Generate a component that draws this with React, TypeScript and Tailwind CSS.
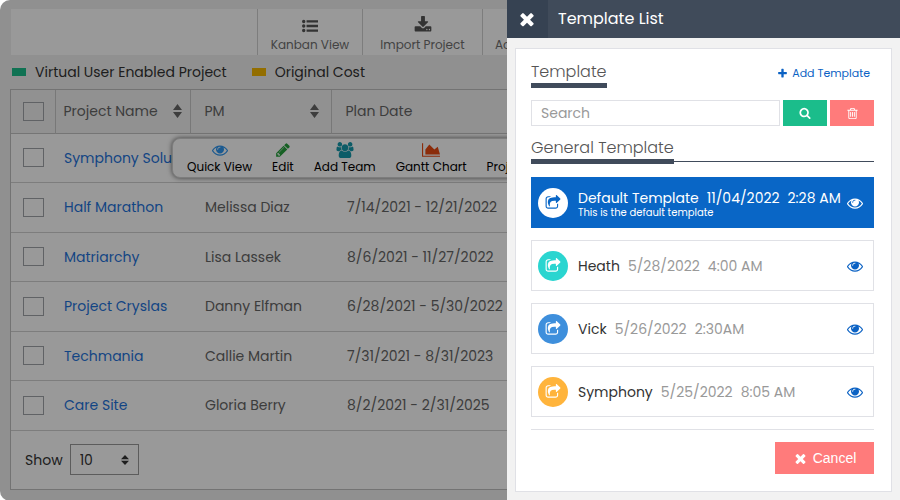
import React from "react";

const ICONS = {
  times:
    "M1490 1322q0 40-28 68l-136 136q-28 28-68 28t-68-28l-294-294-294 294q-28 28-68 28t-68-28l-136-136q-28-28-28-68t28-68l294-294-294-294q-28-28-28-68t28-68l136-136q28-28 68-28t68 28l294 294 294-294q28-28 68-28t68 28l136 136q28 28 28 68t-28 68l-294 294 294 294q28 28 28 68z",
  eye: "M1664 960q-152-236-381-353 61 104 61 225 0 185-131.5 316.5t-316.5 131.5-316.5-131.5-131.5-316.5q0-121 61-225-229 117-381 353 133 205 333.5 326.5t434.5 121.5 434.5-121.5 333.5-326.5zm-720-384q0-20-14-34t-34-14q-125 0-214.5 89.5t-89.5 214.5q0 20 14 34t34 14 34-14 14-34q0-86 61-147t147-61q20 0 34-14t14-34zm848 384q0 34-20 69-140 230-376.5 368.5t-499.5 138.5-499.5-139-376.5-368q-20-35-20-69t20-69q140-229 376.5-368t499.5-139 499.5 139 376.5 368q20 35 20 69z",
  search:
    "M1216 832q0-185-131.5-316.5t-316.5-131.5-316.5 131.5-131.5 316.5 131.5 316.5 316.5 131.5 316.5-131.5 131.5-316.5zm512 832q0 52-38 90t-90 38q-54 0-90-38l-343-342q-179 124-399 124-143 0-273.5-55.5t-225-150-150-225-55.5-273.5 55.5-273.5 150-225 225-150 273.5-55.5 273.5 55.5 225 150 150 225 55.5 273.5q0 220-124 399l343 343q37 37 37 90z",
  plus: "M1600 736v192q0 40-28 68t-68 28h-416v416q0 40-28 68t-68 28h-192q-40 0-68-28t-28-68v-416h-416q-40 0-68-28t-28-68v-192q0-40 28-68t68-28h416v-416q0-40 28-68t68-28h192q40 0 68 28t28 68v416h416q40 0 68 28t28 68z",
  trash:
    "M704 736v576q0 14-9 23t-23 9h-64q-14 0-23-9t-9-23v-576q0-14 9-23t23-9h64q14 0 23 9t9 23zm256 0v576q0 14-9 23t-23 9h-64q-14 0-23-9t-9-23v-576q0-14 9-23t23-9h64q14 0 23 9t9 23zm256 0v576q0 14-9 23t-23 9h-64q-14 0-23-9t-9-23v-576q0-14 9-23t23-9h64q14 0 23 9t9 23zm128 724v-948h-896v948q0 22 7 40.5t14.5 27 10.5 8.5h832q3 0 10.5-8.5t14.5-27 7-40.5zm-672-1076h448l-48-117q-7-9-17-11h-317q-10 2-17 11zm928 32v64q0 14-9 23t-23 9h-96v948q0 83-47 143.5t-113 60.5h-832q-66 0-113-58.5t-47-141.5v-952h-96q-14 0-23-9t-9-23v-64q0-14 9-23t23-9h309l70-167q15-37 54-63t79-26h320q40 0 79 26t54 63l70 167h309q14 0 23 9t9 23z",
  download:
    "M1344 1344q0-26-19-45t-45-19-45 19-19 45 19 45 45 19 45-19 19-45zm256 0q0-26-19-45t-45-19-45 19-19 45 19 45 45 19 45-19 19-45zm128-224v320q0 40-28 68t-68 28h-1472q-40 0-68-28t-28-68v-320q0-40 28-68t68-28h465l135 136q58 56 136 56t136-56l136-136h464q40 0 68 28t28 68zm-325-569q17 41-14 70l-448 448q-18 19-45 19t-45-19l-448-448q-31-29-14-70 17-39 59-39h256v-448q0-26 19-45t45-19h256q26 0 45 19t19 45v448h256q42 0 59 39z",
  list: "M0 384a192 192 0 1 0 384 0a192 192 0 1 0-384 0zM0 896a192 192 0 1 0 384 0a192 192 0 1 0-384 0zM0 1408a192 192 0 1 0 384 0a192 192 0 1 0-384 0zM512 256h1280v256H512zM512 768h1280v256H512zM512 1280h1280v256H512z",
  pencil:
    "M491 1536l91-91-235-235-91 91v107h128v128h107zm523-928q0-22-22-22-10 0-17 7l-542 542q-7 7-7 17 0 22 22 22 10 0 17-7l542-542q7-7 7-17zm-54-192l416 416-832 832h-416v-416zm683 96q0 53-37 90l-166 166-416-416 166-165q36-38 90-38 53 0 91 38l235 234q37 39 37 91z",
  users:
    "M529 896q-162 5-265 128h-134q-82 0-138-40.5t-56-118.5q0-353 124-353 6 0 43.5 21t97.5 42.5 119 21.5q67 0 133-23-5 37-5 66 0 139 81 256zm1071 637q0 120-73 189.5t-194 69.5h-874q-121 0-194-69.5t-73-189.5q0-53 3.5-103.5t14-109 26.5-108.5 43-97.5 62-81 85.5-53.5 111.5-20q10 0 43 21.5t73 48 107 48 135 21.5 135-21.5 107-48 73-48 43-21.5q61 0 111.5 20t85.5 53.5 62 81 43 97.5 26.5 108.5 14 109 3.5 103.5zm-1024-1277q0 106-75 181t-181 75-181-75-75-181 75-181 181-75 181 75 75 181zm704 384q0 159-112.5 271.5t-271.5 112.5-271.5-112.5-112.5-271.5 112.5-271.5 271.5-112.5 271.5 112.5 112.5 271.5zm576 225q0 78-56 118.5t-138 40.5h-134q-103-123-265-128 81-117 81-256 0-29-5-66 66 23 133 23 59 0 119-21.5t97.5-42.5 43.5-21q124 0 124 353zm-128-609q0 106-75 181t-181 75-181-75-75-181 75-181 181-75 181 75 75 181z",
  chart: "M1920 1536v128h-2048v-1536h128v1408h1920zm-256-1024l256 896h-1664v-576l448-576 576 576z",
  share:
    "M1472 989v259q0 119-84.5 203.5t-203.5 84.5h-832q-119 0-203.5-84.5t-84.5-203.5v-832q0-119 84.5-203.5t203.5-84.5h255q13 0 22.5 9.5t9.5 22.5q0 27-26 32-77 26-133 60-10 4-16 4h-112q-66 0-113 47t-47 113v832q0 66 47 113t113 47h832q66 0 113-47t47-113v-214q0-19 18-29 28-13 54-37 16-16 35-8 21 9 21 29zm237-496l-384 384q-18 19-45 19-12 0-25-5-39-17-39-59v-192h-160q-323 0-438 131-119 137-74 473 3 23-20 34-8 2-12 2-16 0-26-13-10-14-21-31t-39.5-68.5-49.5-99.5-38.5-114-17.5-122q0-49 3.5-91t14-90 28-88 47-81.5 68.5-74 94.5-61.5 124.5-48.5 159.5-30.5 196.5-11h160v-192q0-42 39-59 13-5 25-5 26 0 45 19l384 384q19 19 19 45t-19 45z",
};

type IconName = keyof typeof ICONS;

function Icon({ name, className = "", box = "0 0 1792 1792" }: { name: IconName; className?: string; box?: string }) {
  return (
    <svg viewBox={box} fill="currentColor" aria-hidden="true" className={`shrink-0 ${className}`}>
      <path d={ICONS[name]} />
    </svg>
  );
}

function SortArrows({ className }: { className: string }) {
  return (
    <svg viewBox="0 0 8 14" preserveAspectRatio="none" fill="currentColor" aria-hidden="true" className={className}>
      <path d="M4 0 8 6H0zM4 14 0 8h8z" />
    </svg>
  );
}

const projects = [
  { name: "Symphony Solu", pm: "", date: "" },
  { name: "Half Marathon", pm: "Melissa Diaz", date: "7/14/2021 - 12/21/2022" },
  { name: "Matriarchy", pm: "Lisa Lassek", date: "8/6/2021 - 11/27/2022" },
  { name: "Project Cryslas", pm: "Danny Elfman", date: "6/28/2021 - 5/30/2022" },
  { name: "Techmania", pm: "Callie Martin", date: "7/31/2021 - 8/31/2023" },
  { name: "Care Site", pm: "Gloria Berry", date: "8/2/2021 - 2/31/2025" },
];

const templates = [
  { name: "Heath", date: "5/28/2022", time: "4:00 AM", color: "bg-[#2ad5d0]" },
  { name: "Vick", date: "5/26/2022", time: "2:30AM", color: "bg-[#3e8fdc]" },
  { name: "Symphony", date: "5/25/2022", time: "8:05 AM", color: "bg-[#ffb43c]" },
];

function Check({ label }: { label: string }) {
  return (
    <input
      type="checkbox"
      aria-label={label}
      className="block h-[19px] w-[21px] appearance-none border border-[#a0a3a8] bg-transparent checked:bg-[#0a66c8]"
    />
  );
}

function ProjectTable() {
  return (
    <table className="w-[560px] table-fixed border-collapse text-left">
      <colgroup>
        <col className="w-[44px]" />
        <col className="w-[135px]" />
        <col className="w-[141px]" />
        <col />
      </colgroup>
      <thead>
        <tr className="h-[43px] border-b border-[#c4c4c4] bg-[#f2f2f2] text-[#666]">
          <th className="border-r border-[#c8c8c8] pl-3 font-normal">
            <Check label="Select all projects" />
          </th>
          <th className="border-r border-[#c8c8c8] pr-2 pl-2 font-normal">
            <div className="flex items-center justify-between">
              Project Name
              <SortArrows className="h-[14px] w-[9px]" />
            </div>
          </th>
          <th className="border-r border-[#c8c8c8] pr-3 pl-[14px] font-normal">
            <div className="flex items-center justify-between">
              PM
              <SortArrows className="h-[14px] w-[9px]" />
            </div>
          </th>
          <th className="pl-[14px] font-normal">Plan Date</th>
        </tr>
      </thead>
      <tbody>
        {projects.map((p) => (
          <tr key={p.name} className="h-[49px] border-b border-[#d0d0d0] whitespace-nowrap text-[#666] even:h-[50px]">
            <td className="pl-3">
              <Check label={`Select ${p.name}`} />
            </td>
            <td className="pl-[9px]">
              <a href="#project" className="text-[#1f74dc]">
                {p.name}
              </a>
            </td>
            <td className="pl-[15px]">{p.pm}</td>
            <td className="pl-4">{p.date}</td>
          </tr>
        ))}
      </tbody>
    </table>
  );
}

function RowMenu() {
  const item = "flex shrink-0 flex-col items-center gap-px";
  return (
    <div className="absolute top-[138px] left-[172px] flex h-10 w-[400px] items-center gap-5 rounded-lg border border-[#d0d0d0] bg-white pl-[14px] text-xs leading-4 whitespace-nowrap text-black shadow-[0_0_5px_rgba(0,0,0,0.6)]">
      <button className={item}>
        <Icon name="eye" className="h-4 w-4 text-[#2e96f0]" />
        Quick View
      </button>
      <button className={item}>
        <Icon name="pencil" className="h-4 w-4 text-[#25a03c]" />
        Edit
      </button>
      <button className={item}>
        <Icon name="users" box="-64 0 1920 1792" className="h-4 w-[18px] text-[#1599ac]" />
        Add Team
      </button>
      <button className={item}>
        <Icon name="chart" box="-128 0 2048 1792" className="h-4 w-[18px] text-[#e84a12]" />
        Gantt Chart
      </button>
      <button className={`${item} pt-[17px]`}>Proj</button>
    </div>
  );
}

function ProjectPage() {
  const tool =
    "flex shrink-0 flex-col items-center justify-end gap-[3px] border-l border-[#d0d0d0] pb-[2px] text-xs leading-4 text-[#707070]";
  return (
    <main className="relative min-w-0 flex-1 overflow-hidden rounded-l-[10px] bg-[#f0f0f0] pt-[9px] pb-[11px] pl-[10px] text-sm">
      <div className="ml-px flex h-[46px] bg-white">
        <div className="min-w-0 flex-1" />
        <button className={`${tool} w-[105px]`}>
          <Icon name="list" className="h-4 w-4 text-[#555]" />
          Kanban View
        </button>
        <button className={`${tool} w-[120px]`}>
          <Icon name="download" className="h-[18px] w-[18px] text-[#555]" />
          Import Project
        </button>
        <button className={`${tool} w-[25px] pl-4`}>Ad</button>
      </div>
      <div className="flex h-[34px] items-center pl-[2px] text-[#333]">
        <span className="mr-[9px] h-2 w-[14px] bg-[#1bbe8b]" />
        Virtual User Enabled Project
        <span className="mr-[9px] ml-[25px] h-2 w-[14px] bg-[#f5b800]" />
        Original Cost
      </div>
      <div className="border border-r-0 border-[#c0c0c0] bg-white">
        <ProjectTable />
        <div className="flex h-[58px] items-center gap-[7px] pl-[14px] text-[#333]">
          <label htmlFor="page-size">Show</label>
          <div className="relative">
            <select
              id="page-size"
              defaultValue="10"
              className="block h-[31px] w-[69px] appearance-none border border-[#999] bg-transparent pl-[9px]"
            >
              <option>10</option>
              <option>25</option>
              <option>50</option>
            </select>
            <SortArrows className="pointer-events-none absolute top-[11px] right-[10px] h-[10px] w-2" />
          </div>
        </div>
      </div>
      <RowMenu />
      <div className="absolute inset-0 bg-black/40" />
    </main>
  );
}

function SectionTitle({ children }: { children: React.ReactNode }) {
  return <h2 className="border-b-[5px] border-[#404b5b] text-base leading-[22px] font-light text-[#555]">{children}</h2>;
}

function TemplatePanel() {
  return (
    <aside className="flex w-[393px] shrink-0 flex-col bg-[#f2f2f2]">
      <header className="flex h-[38px] items-center bg-[#404b5a] text-white">
        <button aria-label="Close" className="flex h-full w-[41px] items-center justify-center bg-[#364252] pr-[2px]">
          <Icon name="times" className="h-5 w-5" />
        </button>
        <h1 className="pl-[10px] text-base">Template List</h1>
      </header>
      <section className="mx-2 mt-[10px] mb-[9px] flex-1 border border-[#e0e1e6] bg-white pt-3 pr-[17px] pl-[15px]">
        <div className="flex justify-between">
          <SectionTitle>Template</SectionTitle>
          <button className="mr-1 flex items-center gap-1 pb-[2px] text-[11px] text-[#0b62c4]">
            <Icon name="plus" className="h-[11px] w-[11px]" />
            Add Template
          </button>
        </div>
        <div className="mt-3 flex gap-[3px]">
          <input
            type="search"
            aria-label="Search templates"
            placeholder="Search"
            className="h-[26px] min-w-0 flex-1 border border-[#e0e1e6] px-[9px] text-sm placeholder:text-[#999]"
          />
          <button aria-label="Search" className="flex w-11 items-center justify-center bg-[#1bbd8b] text-white">
            <Icon name="search" className="h-3 w-3" />
          </button>
          <button aria-label="Delete" className="flex w-11 items-center justify-center bg-[#ff7b7b] text-white">
            <Icon name="trash" className="h-[13px] w-[13px]" />
          </button>
        </div>
        <div className="mt-[11px] flex items-end">
          <SectionTitle>General Template</SectionTitle>
          <div className="mb-[2px] h-px flex-1 bg-[#404b5b]" />
        </div>
        <ul className="mt-[13px] flex flex-col gap-3 text-sm whitespace-nowrap">
          <li className="flex h-[51px] items-center bg-[#0966c6] pr-[11px] pl-[7px] text-white">
            <span className="flex h-[30px] w-[30px] items-center justify-center rounded-full bg-white text-[#0966c6]">
              <Icon name="share" className="h-4 w-4" />
            </span>
            <div className="ml-[10px] flex-1 pt-1">
              <div className="flex gap-2 leading-4">
                <span>Default Template</span>
                <span>11/04/2022</span>
                <span>2:28 AM</span>
              </div>
              <p className="text-[10px] leading-[14px]">This is the default template</p>
            </div>
            <button aria-label="View Default Template">
              <Icon name="eye" className="h-4 w-4" />
            </button>
          </li>
          {templates.map((t) => (
            <li key={t.name} className="flex h-[51px] items-center border border-[#e0e1e6] pr-[10px] pl-[6px]">
              <span className={`flex h-[30px] w-[30px] items-center justify-center rounded-full text-white ${t.color}`}>
                <Icon name="share" className="h-4 w-4" />
              </span>
              <div className="ml-[10px] flex flex-1 gap-2 text-[#999]">
                <span className="text-[#333]">{t.name}</span>
                <span>{t.date}</span>
                <span>{t.time}</span>
              </div>
              <button aria-label={`View ${t.name}`} className="text-[#0b62c4]">
                <Icon name="eye" className="h-4 w-4" />
              </button>
            </li>
          ))}
        </ul>
        <div className="mt-3 flex justify-end border-t border-[#e0e1e6] pt-3">
          <button className="flex h-8 w-[99px] items-center justify-center gap-[5px] bg-[#ff7b7b] font-['Liberation_Sans',sans-serif] text-sm text-white">
            <Icon name="times" className="h-[15px] w-[15px]" />
            Cancel
          </button>
        </div>
      </section>
    </aside>
  );
}

export default function App() {
  return (
    <div className="flex min-h-screen bg-white font-[Poppins,Inter,sans-serif]">
      <ProjectPage />
      <TemplatePanel />
    </div>
  );
}
